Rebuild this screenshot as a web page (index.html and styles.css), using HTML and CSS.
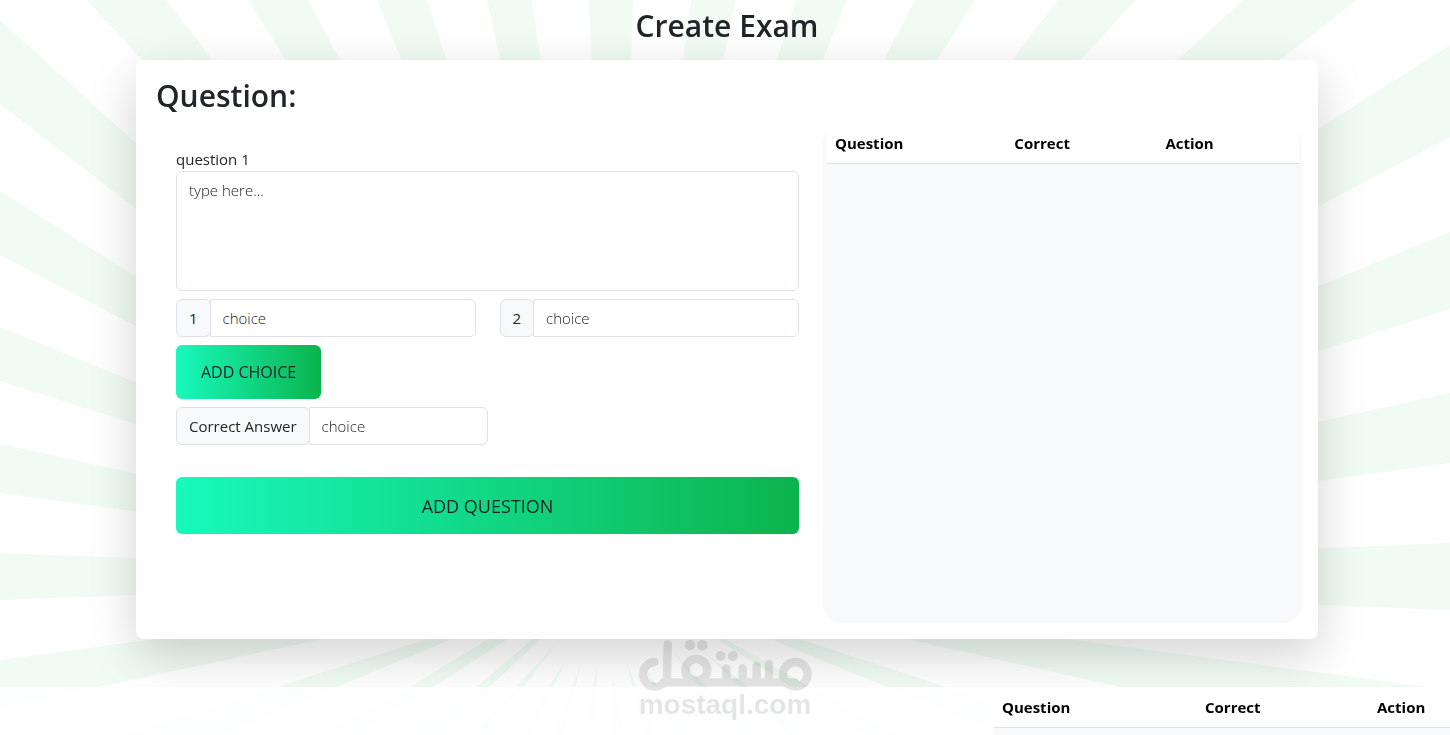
FILE: index.html
```html
<!DOCTYPE html>
<html lang="en">
  <head>
    <meta charset="UTF-8" />
    <meta name="viewport" content="width=device-width, initial-scale=1.0" />
    <title>Create Exam</title>
    <link rel="stylesheet" href="styles.css">
  </head>
  <body>
    <!-- sunburst background -->
    <svg class="rays" viewBox="0 0 1450 735" preserveAspectRatio="xMidYMin slice" aria-hidden="true">
      <polygon points="614,577 87,0 166,0" />
      <polygon points="614,577 248,0 308,0" />
      <polygon points="614,577 377,0 427,0" />
      <polygon points="614,577 487,0 532,0" />
      <polygon points="614,577 589,0 633,0" />
      <polygon points="614,577 691,0 736,0" />
      <polygon points="614,577 796,0 847,0" />
      <polygon points="614,577 915,0 975,0" />
      <polygon points="614,577 1058,0 1135,0" />
      <polygon points="614,577 1243,0 1357,0" />
      <polygon points="614,577 0,20 0,104" />
      <polygon points="614,577 0,191 0,255" />
      <polygon points="614,577 0,327 0,381" />
      <polygon points="614,577 0,444 0,493" />
      <polygon points="614,577 0,553 0,600" />
      <polygon points="614,577 0,660 0,708" />
      <polygon points="614,577 1450,45 1450,137" />
      <polygon points="614,577 1450,232 1450,309" />
      <polygon points="614,577 1450,393 1450,463" />
      <polygon points="614,577 1450,543 1450,610" />
      <polygon points="907,639 1067,639 1428,687 1450,690 1450,759 1120,687" />
      <polygon points="427,639 452,639 337,687 223,735 124,735 277,687" />
      <polygon points="488,639 508,639 433,687 355,735 322,735 410,687" />
      <polygon points="532,639 540,639 490,687 440,735 410,735 477,687" />
      <polygon points="557,643 487,735 471,735" />
      <polygon points="566,660 530,735 517,735" />
      <polygon points="580,667 564,735 553,735" />
      <polygon points="597,668 594,735 582,735" />
      <polygon points="613,679 625,735 612,735" />
      <polygon points="628,665 655,735 643,735" />
      <polygon points="645,668 690,735 675,735" />
      <polygon points="672,650 752,735 735,735" />
      <polygon points="700,648 808,735 788,735" />
      <polygon points="717,639 725,639 896,735 866,735" />
      <polygon points="770,639 800,639 946,687 1080,735 1004,735 887,687" />
    </svg>

    <h1>Create Exam</h1>

    <main class="card">
      <h2>Question:</h2>
      <div class="card-row">
        <form class="exam-form">
          <label for="question">question 1</label>
          <textarea id="question" class="form-control" placeholder="type here..."></textarea>

          <div class="choices">
            <div class="input-group">
              <label for="choice1">1</label>
              <input type="text" id="choice1" class="form-control" placeholder="choice" />
            </div>
            <div class="input-group">
              <label for="choice2">2</label>
              <input type="text" id="choice2" class="form-control" placeholder="choice" />
            </div>
          </div>

          <button type="button" class="btn">ADD CHOICE</button>

          <div class="input-group correct">
            <label for="correct">Correct Answer</label>
            <input type="text" id="correct" class="form-control" placeholder="choice" />
          </div>

          <button type="button" class="btn btn-block">ADD QUESTION</button>
        </form>

        <div class="question-list">
          <table>
            <thead>
              <tr>
                <th class="col-question">Question</th>
                <th class="col-correct">Correct</th>
                <th>Action</th>
              </tr>
            </thead>
          </table>
        </div>
      </div>
    </main>

    <section class="saved">
      <div class="saved-list">
        <table>
          <thead>
            <tr>
              <th class="col-question">Question</th>
              <th class="col-correct">Correct</th>
              <th>Action</th>
            </tr>
          </thead>
        </table>
      </div>
    </section>

    <div class="watermark">
      <svg viewBox="114 87 522 156" aria-hidden="true">
        <g fill="none" stroke="#000" stroke-width="25" stroke-linecap="round">
          <path d="M163 156A37 37 0 1 0 201 205L203 103" />
          <line x1="190" y1="217" x2="585" y2="217" />
          <circle cx="289" cy="180" r="33" />
          <line x1="379" y1="175" x2="379" y2="215" />
          <line x1="428" y1="175" x2="428" y2="215" />
          <line x1="470" y1="168" x2="470" y2="215" />
          <line x1="507" y1="162" x2="507" y2="215" />
          <circle cx="586" cy="193" r="37" />
        </g>
        <circle cx="270" cy="105" r="16" />
        <circle cx="307" cy="106" r="16" />
        <circle cx="362" cy="138" r="15" />
        <circle cx="399" cy="138" r="15" />
      </svg>
      <span>mostaql.com</span>
    </div>
  </body>
</html>
```
FILE: styles.css
```css
* {
  box-sizing: border-box;
}

body {
  margin: 0;
  min-height: 100vh;
  display: flex;
  flex-direction: column;
  overflow: hidden;
  font-family: "Open Sans", "Noto Sans", sans-serif;
  font-size: 15px;
  line-height: 24px;
  color: #212529;
  background-color: #fff;
}

.rays {
  position: fixed;
  top: 0;
  left: 0;
  width: 100%;
  height: 100%;
  z-index: -1;
  fill: #f0fbf4;
}

h1,
h2 {
  font-size: 30px;
  font-weight: 600;
  line-height: 40px;
}

h1 {
  margin: 6px 132px 14px 136px;
  text-align: center;
}

h2 {
  margin: 0 0 7px;
}

.card {
  margin: 0 132px 48px 136px;
  padding: 16px 16px 16px 20px;
  background-color: #fff;
  border-radius: 8px;
  box-shadow: 0 16px 48px rgba(0, 0, 0, 0.175);
}

.card-row {
  display: flex;
  gap: 24px;
}

.exam-form {
  flex: 1;
  display: flex;
  flex-direction: column;
  align-items: flex-start;
  gap: 8px;
  padding: 24px 0 0 20px;
}

.exam-form > label {
  margin-bottom: -8px;
}

.form-control {
  width: 100%;
  min-width: 0;
  height: 38px;
  padding: 6px 12px;
  font: inherit;
  color: #212529;
  background-color: #fff;
  border: 1px solid #dee2e6;
  border-radius: 6px;
}

.form-control::placeholder {
  color: #212529;
  font-weight: 300;
  opacity: 1;
}

textarea.form-control {
  display: block;
  height: 120px;
  resize: none;
}

.choices {
  display: grid;
  grid-template-columns: 1fr 1fr;
  gap: 24px;
  width: 100%;
}

.input-group {
  display: flex;
}

.input-group label {
  padding: 6px 12px;
  white-space: nowrap;
  background-color: #f8f9fb;
  border: 1px solid #dee2e6;
  border-radius: 6px;
}

.input-group .form-control {
  flex: 1;
  margin-left: -1px;
  border-radius: 0 6px 6px 0;
}

.correct {
  width: 50%;
}

.btn {
  height: 54px;
  padding: 0 25px;
  font: inherit;
  font-size: 16px;
  color: #212529;
  background: linear-gradient(to right, #18f9bd, #0bb44c);
  border: none;
  border-radius: 6px;
  cursor: pointer;
}

.btn-block {
  width: 100%;
  height: 57px;
  margin-top: 24px;
  font-size: 18px;
}

.question-list {
  width: 479px;
  min-height: 500px;
  padding: 0 3px 0 4px;
  background-color: #f8f9fb;
  border-radius: 20px;
}

table {
  width: 100%;
  table-layout: fixed;
  border-collapse: collapse;
}

th {
  padding: 8px;
  text-align: left;
  font-weight: 700;
  color: #000;
  background-color: #fff;
  border-bottom: 1px solid #dee2e6;
}

.col-question {
  width: 38%;
}

.col-correct {
  width: 32%;
}

.saved {
  flex: 1;
  display: flex;
  justify-content: flex-end;
  background-color: rgba(255, 255, 255, 0.85);
}

.saved-list {
  width: 456px;
  background-color: #f8f9fb;
}

.saved-list .col-question {
  width: 203px;
}

.saved-list .col-correct {
  width: 172px;
}

.watermark {
  position: fixed;
  left: 50%;
  bottom: 16px;
  width: 174px;
  transform: translateX(-50%);
  text-align: center;
  font-family: "Liberation Sans", sans-serif;
  font-size: 28px;
  font-weight: 700;
  line-height: 28px;
  color: #000;
  opacity: 0.1;
  pointer-events: none;
}

.watermark svg {
  display: block;
  width: 100%;
}
```
